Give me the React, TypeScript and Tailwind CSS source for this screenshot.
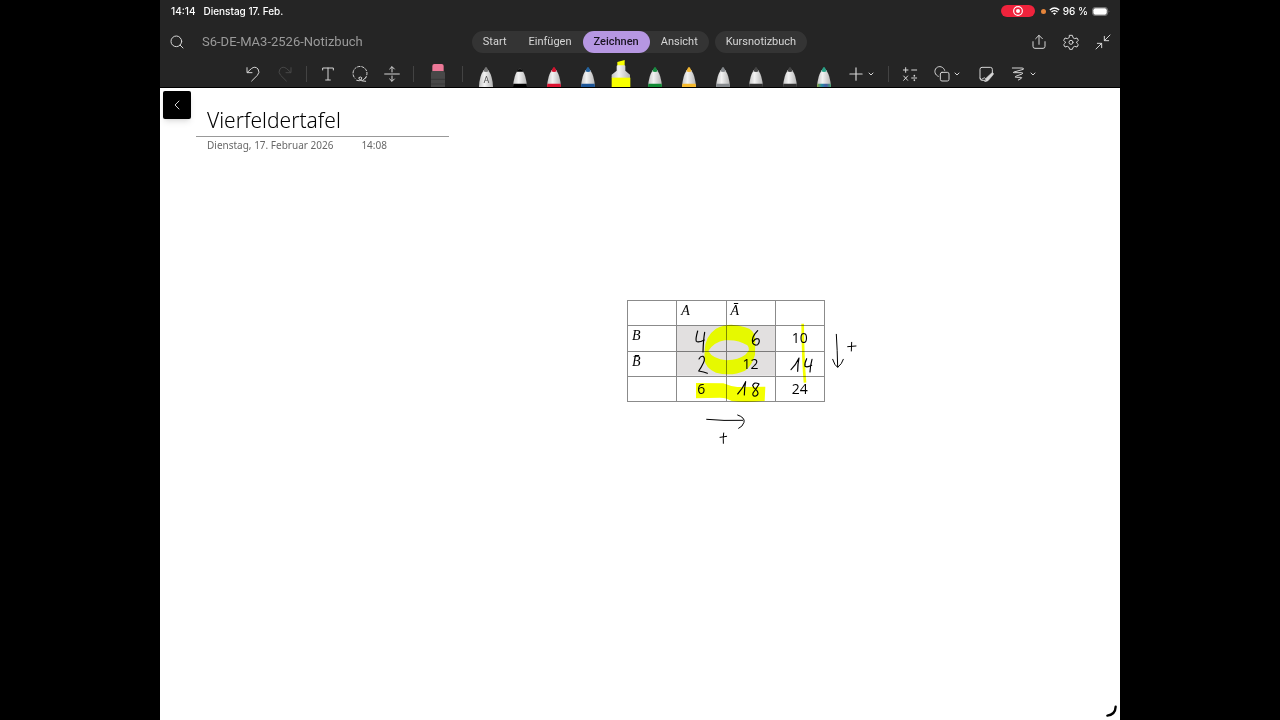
import React from 'react';
import { ChevronDown, ChevronLeft, Search } from 'lucide-react';

interface IconProps {
    children: React.ReactNode;
    className?: string;
}

const Icon: React.FC<IconProps> = ({ children, className = 'size-4' }) => (
    <svg
        viewBox="0 0 48 48"
        className={className}
        fill="none"
        stroke="currentColor"
        strokeWidth={3}
        strokeLinecap="round"
        strokeLinejoin="round"
        aria-hidden="true"
    >
        {children}
    </svg>
);

interface ToolButtonProps {
    label: string;
    children: React.ReactNode;
    className?: string;
}

const ToolButton: React.FC<ToolButtonProps> = ({ label, children, className = 'w-8' }) => (
    <button type="button" aria-label={label} className={`flex h-full shrink-0 items-center justify-center ${className}`}>
        {children}
    </button>
);

const Divider = () => <span className="h-4 w-px shrink-0 bg-[#434343]" />;

interface Pen {
    name: string;
    tip: string;
    band: string;
}

const pens: Pen[] = [
    { name: 'Schwarz', tip: '#050505', band: '#000000' },
    { name: 'Rot', tip: '#d3122e', band: '#dc1230' },
    { name: 'Blau', tip: '#24639f', band: '#1c5597' },
    { name: 'Textmarker', tip: '#f8ff00', band: '#f8ff00' },
    { name: 'Grün', tip: '#188c41', band: '#118a35' },
    { name: 'Gelb', tip: '#f2b632', band: '#f5b92c' },
    { name: 'Grau', tip: '#85898d', band: '#85898d' },
    { name: 'Bleistift', tip: '#444444', band: '#303030' },
    { name: 'Bleistift dunkel', tip: '#444444', band: '#303030' },
    { name: 'Galaxie', tip: '#29a186', band: 'url(#galaxy)' },
];

const PenIcon: React.FC<{ pen: Pen }> = ({ pen }) => {
    if (pen.name === 'Textmarker') {
        return (
            <svg viewBox="0 0 60 81" className="h-[27px] w-5" aria-hidden="true">
                <path d="M19 6 41 0v20H19z" fill="#f8ff00" />
                <path d="M17 19q0-3 3-3h20q3 0 3 3v13l14 12v10H2V44l15-12z" fill="url(#barrel)" />
                <path d="M2 53h56v28H2z" fill="#f8ff00" />
            </svg>
        );
    }
    const blunt = pen.name === 'Schwarz';
    return (
        <svg viewBox="0 0 42 63" className="h-[21px] w-3.5" aria-hidden="true">
            <path d="M0 63Q2 31 14 13q7-9 14 0 12 18 14 50z" fill="url(#barrel)" />
            {blunt ? (
                <path d="M12 17q-1-7 9-8 10 1 9 8z" fill={pen.tip} />
            ) : (
                <path d="M13 16 18 5q3-4 6 0l5 11q-8 4-16 0z" fill={pen.tip} />
            )}
            <path d="M1 53h40l1 10H0z" fill={pen.band} />
        </svg>
    );
};

const tabs = ['Start', 'Einfügen', 'Zeichnen', 'Ansicht'];

const StatusBar = () => (
    <div className="flex h-6 items-center justify-between pb-0.5 pl-[11px] pr-2.5 font-['Inter',sans-serif] text-[10px] font-medium text-white">
        <div className="flex gap-2">
            <span>14:14</span>
            <span>Dienstag 17. Feb.</span>
        </div>
        <div className="flex items-center">
            <span className="flex h-3 w-[34px] items-center justify-center rounded-full bg-[#ef233c]">
                <svg viewBox="0 0 30 30" className="size-2.5" aria-hidden="true">
                    <circle cx="15" cy="15" r="13" fill="none" stroke="white" strokeWidth="3.5" />
                    <circle cx="15" cy="15" r="6" fill="white" />
                </svg>
            </span>
            <span className="ml-1.5 size-[5px] rounded-full bg-[#e5853b]" />
            <svg viewBox="0 0 32 24" className="ml-[3px] h-2 w-[11px]" fill="none" stroke="white" strokeWidth="4" aria-hidden="true">
                <path d="M2 9q14-12 28 0M7 15q9-8 18 0" />
                <path d="m11 19 5 5 5-5q-5-4-10 0z" fill="white" stroke="none" />
            </svg>
            <span className="ml-[3px]">96 %</span>
            <svg viewBox="0 0 56 28" className="ml-1 h-[9px] w-[18px]" aria-hidden="true">
                <rect x="1.5" y="1.5" width="47" height="25" rx="8" fill="none" stroke="#858585" strokeWidth="2.5" />
                <rect x="4" y="4" width="42" height="20" rx="6" fill="white" />
                <path d="M52 10q4 4 0 8z" fill="#858585" />
            </svg>
        </div>
    </div>
);

const TitleBar = () => (
    <div className="grid h-9 grid-cols-[1fr_auto_1fr] items-center pl-2 pr-[9px] text-[#d6d6d6]">
        <div className="flex items-center">
            <button type="button" aria-label="Suchen" className="flex size-[18px] items-center justify-center">
                <Search className="size-4" strokeWidth={1.5} />
            </button>
            <span className="ml-4 text-[13px] text-[#9a9a9a]">S6-DE-MA3-2526-Notizbuch</span>
        </div>
        <nav className="flex gap-1.5 text-[11px]">
            <div className="flex h-[22px] rounded-full bg-[#343434]">
                {tabs.map((tab) => (
                    <button
                        key={tab}
                        type="button"
                        className={
                            tab === 'Zeichnen'
                                ? 'rounded-full bg-[#b697e2] px-[11px] font-medium text-[#181320]'
                                : 'px-[11px]'
                        }
                    >
                        {tab}
                    </button>
                ))}
            </div>
            <button type="button" className="h-[22px] rounded-full bg-[#343434] px-[11px]">
                Kursnotizbuch
            </button>
        </nav>
        <div className="flex items-center justify-end gap-4">
            <button type="button" aria-label="Teilen">
                <Icon>
                    <path d="M24 31V4M14 14 24 4l10 10M6 23v14q0 6 6 6h24q6 0 6-6V23" />
                </Icon>
            </button>
            <button type="button" aria-label="Einstellungen">
                <Icon>
                    <path d="M20 4h8l2 7 5 3 7-2 4 7-5 5v3l5 5-4 7-7-2-5 3-2 6h-8l-2-6-5-3-7 2-4-7 5-5v-3l-5-5 4-7 7 2 5-3z" />
                    <circle cx="24" cy="25" r="6" />
                </Icon>
            </button>
            <button type="button" aria-label="Verkleinern">
                <Icon>
                    <path d="M45 3 28 20M28 7v13h13M3 45l17-17M7 28h13v13" />
                </Icon>
            </button>
        </div>
    </div>
);

const DrawingTools = () => (
    <div className="flex h-7 items-center justify-center border-b border-black pr-1 text-[#d6d6d6]">
        <ToolButton label="Rückgängig">
            <Icon>
                <path d="M6 5v15h15M7 19 19 8q11-9 20 1 7 10-2 19L20 45" />
            </Icon>
        </ToolButton>
        <ToolButton label="Wiederholen" className="mr-[5px] w-8 text-[#484848]">
            <Icon>
                <path d="M42 5v15H27M41 19 29 8Q18-1 9 9q-7 10 2 19l17 17" />
            </Icon>
        </ToolButton>
        <Divider />
        <ToolButton label="Text" className="ml-[5px] w-8">
            <Icon>
                <path d="M8 12V6h32v6M24 6v35M17 42h14" />
            </Icon>
        </ToolButton>
        <ToolButton label="Lassoauswahl">
            <Icon>
                <path d="M39 37A21 21 0 1 0 9 37" strokeDasharray="7 5" />
                <path d="M14 43q9 4 14-2 4-8-3-8-8 1-3 7 5 6 19 6M42 34q-4 6-10 9" />
            </Icon>
        </ToolButton>
        <ToolButton label="Platz einfügen" className="mr-[5px] w-8">
            <Icon>
                <path d="M2 24h44M24 18V3M17 9l7-7 7 7M24 30v15M17 39l7 7 7-7" />
            </Icon>
        </ToolButton>
        <Divider />
        <ToolButton label="Radierer" className="mx-[5px] w-[38px] items-end">
            <svg viewBox="0 0 42 69" className="h-[23px] w-3.5" aria-hidden="true">
                <path d="M4 22V6q0-6 6-6h22q6 0 6 6v16z" fill="#ec7897" />
                <path d="M3 21h36l3 5v43H0V26z" fill="#484848" />
                <path d="M0 46h42M0 60h42" stroke="#303030" strokeWidth="2" />
            </svg>
        </ToolButton>
        <Divider />
        <div className="ml-[7px] flex h-full w-[371px] shrink-0">
            <ToolButton label="Freihand zu Text" className="flex-1 items-end">
                <span className="relative">
                    <svg viewBox="0 0 42 63" className="h-[21px] w-3.5" aria-hidden="true">
                        <path d="M0 63Q1 31 14 13q7-9 14 0 13 18 14 50z" fill="url(#barrel)" />
                        <path d="M13 16 18 5q3-4 6 0l5 11q-8 4-16 0z" fill="#777" />
                    </svg>
                    <span className="absolute inset-x-0 bottom-0.5 text-center text-[9px] leading-[10px] text-[#555]">A</span>
                </span>
            </ToolButton>
            {pens.map((pen) => (
                <ToolButton key={pen.name} label={pen.name} className="flex-1 items-end">
                    <PenIcon pen={pen} />
                </ToolButton>
            ))}
        </div>
        <ToolButton label="Stift hinzufügen" className="ml-[5px] mr-2.5 w-8 gap-1">
            <Icon className="size-3.5 shrink-0">
                <path d="M24 3v42M3 24h42" strokeWidth={4} />
            </Icon>
            <ChevronDown className="size-2 shrink-0" strokeWidth={3} />
        </ToolButton>
        <Divider />
        <ToolButton label="Mathematik" className="ml-[5px] w-8">
            <Icon>
                <path d="M4 12h14M11 5v14M29 12h15M5 30l12 13M17 30 5 43M29 36h15" />
                <path d="M37 29v1M37 42v1" strokeWidth={5} />
            </Icon>
        </ToolButton>
        <ToolButton label="Formen" className="mx-1.5 w-8 gap-[3px]">
            <Icon className="size-4 shrink-0">
                <path d="M13 31A15 15 0 1 1 32 13" />
                <rect x="19" y="19" width="26" height="26" rx="5" />
            </Icon>
            <ChevronDown className="size-2 shrink-0" strokeWidth={3} />
        </ToolButton>
        <ToolButton label="Haftnotiz" className="mr-1.5 w-8">
            <Icon>
                <path d="M20 43H12q-6 0-6-6V10q0-6 6-6h25q6 0 6 6v11M6 37q5 7 10 0 4-4 7 1" />
                <path d="m25 36 15-14q4-3 6 0 1 3-2 6L30 44l-9 3z" fill="currentColor" strokeWidth={2} />
            </Icon>
        </ToolButton>
        <ToolButton label="Freihandwiedergabe" className="w-8 gap-[3px]">
            <Icon className="size-4 shrink-0">
                <path d="M7 6h29q6 0 4 4L12 18q-5 2 1 2h22q6 0 1 4L17 31q-4 3 2 3h14q4 1 1 3l-9 5" />
            </Icon>
            <ChevronDown className="size-2 shrink-0" strokeWidth={3} />
        </ToolButton>
    </div>
);

const cell = 'border border-[#8b8b8b] p-0 align-middle';
const head = 'border border-[#8b8b8b] px-1 pb-1 text-left align-middle font-["Liberation_Serif",serif] text-sm leading-5 font-normal italic';

const ContingencyTable = () => (
    <table className="h-[102px] w-[198px] table-fixed border-collapse text-center font-['Open_Sans',sans-serif] text-sm leading-5 text-black">
        <thead>
            <tr>
                <td className={cell} />
                <th scope="col" className={head}>A</th>
                <th scope="col" className={head}>A&#772;</th>
                <td className={cell} />
            </tr>
        </thead>
        <tbody>
            <tr>
                <th scope="row" className={head}>B</th>
                <td className={cell} />
                <td className={cell} />
                <td className={cell}>10</td>
            </tr>
            <tr>
                <th scope="row" className={head}>B&#772;</th>
                <td className={cell} />
                <td className={cell}>12</td>
                <td className={cell} />
            </tr>
            <tr className="h-[25px]">
                <td className={cell} />
                <td className={cell}>6</td>
                <td className={cell} />
                <td className={cell}>24</td>
            </tr>
        </tbody>
    </table>
);

const Highlights = () => (
    <svg viewBox="0 0 780 495" className="absolute left-[450px] top-[202px] h-[165px] w-[260px] mix-blend-multiply" aria-hidden="true">
        {/* grey block behind the four inner fields */}
        <path d="M200 107h295v150H200z" fill="#e2e0e0" />
        <path
            fill="#e6f900"
            fillRule="evenodd"
            d="M284 180Q286 138 318 116Q358 94 405 112Q434 118 436 148L435 194Q427 226 405 242Q365 260 318 248Q286 235 283 208ZM295 183Q312 156 345 151Q385 148 412 166Q424 178 406 194Q386 209 350 211Q308 207 295 183Z"
        />
        <path fill="#f4ff00" d="M258 279 340 280Q358 288 382 291L466 290 464 333Q400 339 365 333Q350 323 330 323L258 325Z" />
        <path d="M578 101Q579 210 585 278" fill="none" stroke="#f4ff00" strokeWidth="8" />
    </svg>
);

const Handwriting = () => (
    <svg
        viewBox="0 0 780 495"
        className="absolute left-[450px] top-[202px] h-[165px] w-[260px]"
        fill="none"
        stroke="black"
        strokeWidth="3.5"
        strokeLinecap="round"
        strokeLinejoin="round"
        aria-hidden="true"
    >
        <path d="M263 123Q256 148 259 154Q265 159 283 150M284 127Q280 150 279 186" />
        <path d="M443 122Q423 142 428 159Q433 168 443 164Q451 155 446 147Q437 142 429 155" />
        <path d="M267 207Q272 197 279 199Q287 205 280 219Q273 234 266 243Q282 245 292 250" />
        <path d="M543 239Q558 224 567 204Q563 223 563 244M590 206Q583 220 585 229Q592 233 605 226M606 208Q601 226 600 246" />
        <path d="M383 312Q399 294 407 275Q403 295 403 315M446 281Q432 275 428 286Q430 295 440 301Q449 312 438 318Q426 320 429 309Q438 298 447 282" />
        <path d="M679 133Q682 180 683 231M668 208Q674 227 683 232Q696 222 700 208M713 170 738 168M725 157 724 183" strokeWidth="3" />
        <path d="M290 388Q340 393 398 391M383 375Q406 383 402 397Q398 410 386 415M330 442 350 439M341 429Q339 445 340 460" strokeWidth="3" />
    </svg>
);

const NotebookPage = () => (
    <main className="relative flex-1 overflow-hidden bg-white">
        <button
            type="button"
            aria-label="Zurück"
            className="absolute left-[3px] top-[3px] flex size-7 items-center justify-center rounded-xs bg-black text-[#d6d6d6] shadow-md"
        >
            <ChevronLeft className="size-4" strokeWidth={1.5} />
        </button>
        <header className="ml-9 w-[253px] pt-4 font-['Noto_Sans',sans-serif]">
            <h1 className="border-b border-[#999] pl-[11px] text-[21px] leading-8 font-light text-black">Vierfeldertafel</h1>
            <div className="flex gap-7 pl-[11px] text-[10px] leading-4 text-[#686868]">
                <span>Dienstag, 17. Februar 2026</span>
                <span>14:08</span>
            </div>
        </header>
        <div className="absolute left-[467px] top-[212px]">
            <ContingencyTable />
        </div>
        <Highlights />
        <Handwriting />
        <svg viewBox="0 0 36 36" className="absolute bottom-[3px] right-[3px] size-3" fill="none" stroke="black" strokeWidth="7" strokeLinecap="round" aria-hidden="true">
            <path d="M32 5Q31 29 7 32" />
        </svg>
    </main>
);

const App = () => (
    <div className="min-h-screen bg-black">
        {/* gradients shared by all pens */}
        <svg className="absolute size-0" aria-hidden="true">
            <defs>
                <linearGradient id="barrel">
                    <stop offset="0" stopColor="#c4c4c4" />
                    <stop offset="0.4" stopColor="#f2f2f2" />
                    <stop offset="1" stopColor="#b4b4b4" />
                </linearGradient>
                <linearGradient id="galaxy">
                    <stop offset="0" stopColor="#8aa23c" />
                    <stop offset="0.35" stopColor="#258ca5" />
                    <stop offset="0.65" stopColor="#4957a5" />
                    <stop offset="1" stopColor="#3fa66c" />
                </linearGradient>
            </defs>
        </svg>
        <div className="mx-auto flex min-h-screen w-3/4 flex-col font-['Roboto',sans-serif]">
            <div className="bg-[#252525]">
                <StatusBar />
                <TitleBar />
                <DrawingTools />
            </div>
            <NotebookPage />
        </div>
    </div>
);

export default App;
